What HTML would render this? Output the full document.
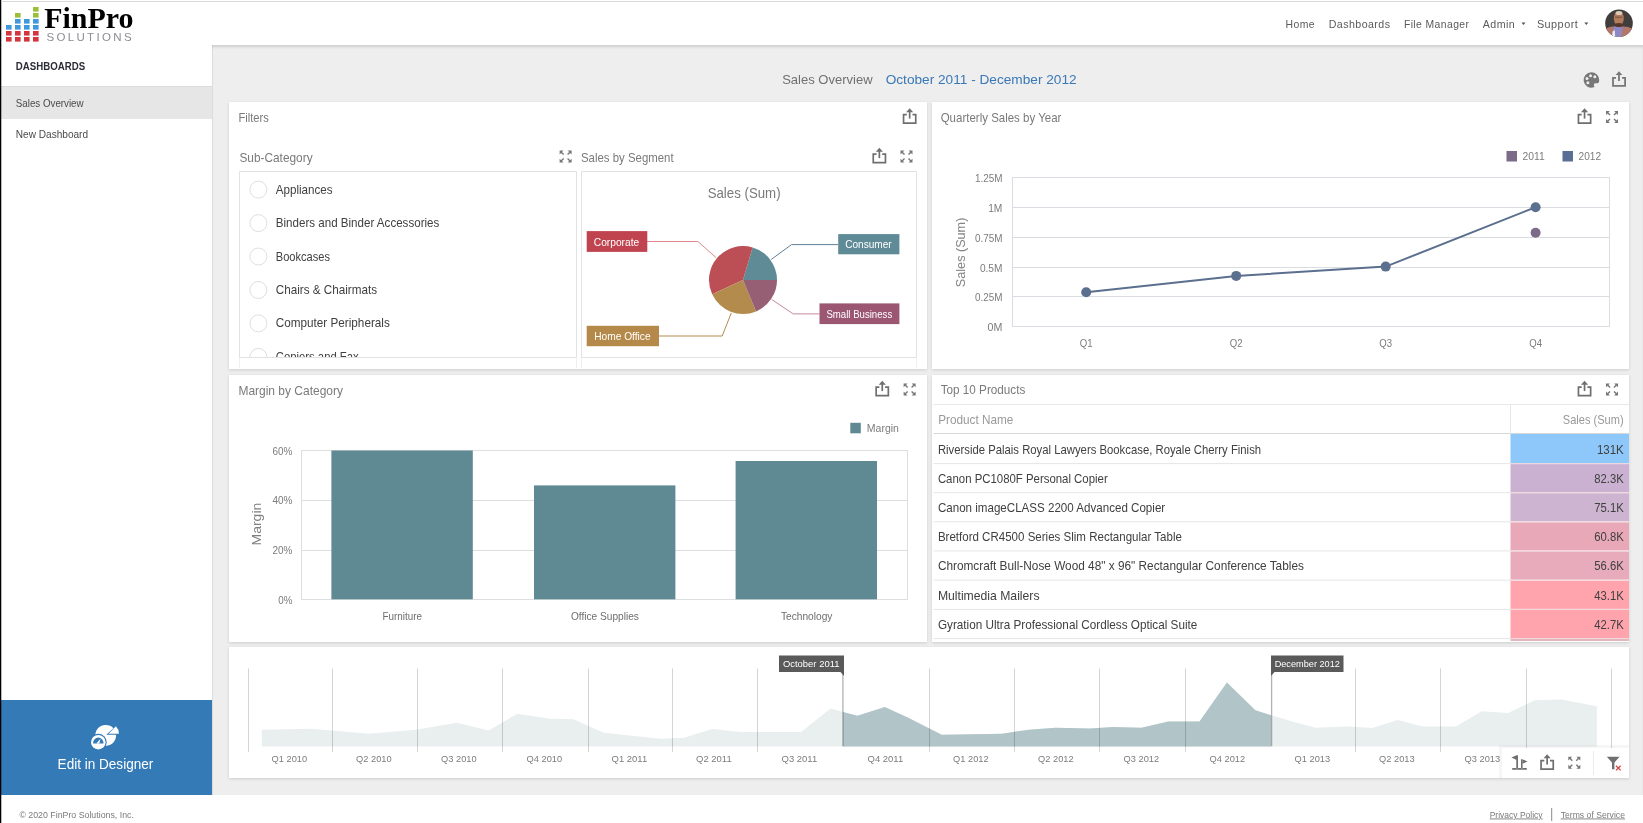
<!DOCTYPE html>
<html lang="en">
<head>
<meta charset="utf-8">
<title>FinPro Solutions - Sales Overview</title>
<style>
*{box-sizing:border-box;margin:0;padding:0}
html,body{width:1643px;height:823px;overflow:hidden;background:#fff}
body{font-family:"Liberation Sans",sans-serif;color:#444;position:relative;font-size:12px}
.abs{position:absolute}
.t{position:absolute;white-space:nowrap;line-height:1}
#leftedge{left:0;top:0;width:2px;height:823px;background:linear-gradient(90deg,#000 0,#000 50%,rgba(0,0,0,.28) 50%);z-index:50}
#topline{left:1px;top:1px;width:1642px;height:1px;background:#dadadd;z-index:50}
#header{left:0;top:0;width:1643px;height:45px;background:#fff;z-index:5}
#main{left:212px;top:45px;width:1431px;height:750px;background:#eee;z-index:6;box-shadow:inset 0 3px 3px -1px rgba(0,0,0,.13), inset 1px 0 0 rgba(0,0,0,.05)}
#sidebar{left:0;top:45px;width:212px;height:750px;background:#fff}
#sel{left:1px;top:86px;width:211px;height:33px;background:#e6e6e6;border-top:1px solid #dcdcdc}
#editbtn{left:1px;top:700px;width:211px;height:95px;background:#337ab7;z-index:7}
#footer{left:0;top:795px;width:1643px;height:28px;background:#fff}
.card{position:absolute;background:#fff;box-shadow:0 1px 3px rgba(0,0,0,.14);z-index:8}
svg{position:absolute;left:0;top:0;overflow:visible}
svg text{font-family:"Liberation Sans",sans-serif}
svg .ttl{fill:#7a7a7a;font-size:11.9px}
svg .li{fill:#404040;font-size:11.9px}
svg .pl{fill:#fff;font-size:10.6px}
svg .ax{fill:#7c7c7c;font-size:10.6px}
svg .nav{fill:#5a5a5a;font-size:11px;letter-spacing:.45px}
</style>
</head>
<body>
<div id="header" class="abs"></div>
<div id="sidebar" class="abs"></div>
<div id="sel" class="abs"></div>
<div id="main" class="abs"></div>
<div id="footer" class="abs"></div>
<div id="editbtn" class="abs"></div>
<div id="leftedge" class="abs"></div>
<div id="topline" class="abs"></div>
<div class="card" id="c1" style="left:229px;top:102px;width:698px;height:267px"></div>
<div class="card" id="c2" style="left:932px;top:102px;width:697px;height:267px"></div>
<div class="card" id="c3" style="left:229px;top:375px;width:698px;height:267px"></div>
<div class="card" id="c4" style="left:932px;top:375px;width:697px;height:267px"></div>
<div class="card" id="c5" style="left:229px;top:647px;width:1400px;height:131px"></div>
<svg id="ov" width="1643" height="823" viewBox="0 0 1643 823" style="z-index:20;will-change:transform">
<defs>
  <g id="ic-export" fill="none" stroke="#6f6f6f" stroke-width="1.7">
    <path d="M4.1 6.6H0.85V15.15H13.05V6.6H9.8"/>
    <path d="M6.95 10.6V3.5" />
    <path d="M3.4 4.3L6.95 0.2L10.5 4.3Z" fill="#6f6f6f" stroke="none"/>
  </g>
  <g id="ic-expand" fill="#777" stroke="none">
    <path d="M0 0H3.9L0 3.9Z"/><path d="M12 0H8.1L12 3.9Z"/><path d="M0 12H3.9L0 8.1Z"/><path d="M12 12H8.1L12 8.1Z"/>
    <path d="M1.4 1.4L4 4M10.6 1.4L8 4M1.4 10.6L4 8M10.6 10.6L8 8" stroke="#777" stroke-width="1.4" fill="none"/>
  </g>
</defs>
<g id="chrome">
<rect x="33" y="7" width="5.6" height="4.6" fill="#9bbf3b"/><rect x="15" y="13" width="5.6" height="4.6" fill="#9bbf3b"/><rect x="33" y="13" width="5.6" height="4.6" fill="#9bbf3b"/><rect x="15" y="19" width="5.6" height="4.6" fill="#3f97dc"/><rect x="24" y="19" width="5.6" height="4.6" fill="#3f97dc"/><rect x="33" y="19" width="5.6" height="4.6" fill="#3f97dc"/><rect x="6" y="25" width="5.6" height="4.6" fill="#3f97dc"/><rect x="15" y="25" width="5.6" height="4.6" fill="#3f97dc"/><rect x="24" y="25" width="5.6" height="4.6" fill="#3f97dc"/><rect x="33" y="25" width="5.6" height="4.6" fill="#3f97dc"/><rect x="6" y="31" width="5.6" height="4.6" fill="#d5353f"/><rect x="15" y="31" width="5.6" height="4.6" fill="#d5353f"/><rect x="24" y="31" width="5.6" height="4.6" fill="#d5353f"/><rect x="33" y="31" width="5.6" height="4.6" fill="#d5353f"/><rect x="6" y="37" width="5.6" height="4.6" fill="#d5353f"/><rect x="15" y="37" width="5.6" height="4.6" fill="#d5353f"/><rect x="24" y="37" width="5.6" height="4.6" fill="#d5353f"/><rect x="33" y="37" width="5.6" height="4.6" fill="#d5353f"/>
<text x="44.2" y="28.3" textLength="89.3" lengthAdjust="spacingAndGlyphs" font-size="29.4" font-weight="bold" fill="#000" style="font-family:'Liberation Serif',serif">FinPro</text>
<text x="46.4" y="40.8" textLength="85.2" lengthAdjust="spacing" font-size="11.5" fill="#8c8c94">SOLUTIONS</text>
<text x="1285.6" y="28.2" class="nav" textLength="29.5" lengthAdjust="spacingAndGlyphs">Home</text>
<text x="1328.7" y="28.2" class="nav" textLength="61.8" lengthAdjust="spacingAndGlyphs">Dashboards</text>
<text x="1403.9" y="28.2" class="nav" textLength="65.5" lengthAdjust="spacingAndGlyphs">File Manager</text>
<text x="1482.8" y="28.2" class="nav" textLength="32.4" lengthAdjust="spacingAndGlyphs">Admin</text>
<text x="1536.9" y="28.2" class="nav" textLength="41.3" lengthAdjust="spacingAndGlyphs">Support</text>
<path d="M1521.5 22.6h4l-2 2.4z M1584.3 22.6h4l-2 2.4z" fill="#555"/>
<clipPath id="avc"><circle cx="1619" cy="23.3" r="13.8"/></clipPath>
<g clip-path="url(#avc)">
<rect x="1604" y="8" width="30" height="31" fill="#403e3c"/>
<path d="M1604 29.5Q1610 26.2 1614 26.5H1623Q1628 26.2 1634 29.5V40H1604Z" fill="#b3766a"/>
<path d="M1614 26.5H1622.6L1621.2 38H1613Z" fill="#8c88c6"/>
<path d="M1612.6 31.5L1614.6 30L1615.4 38H1612Z" fill="#efeff4"/>
<ellipse cx="1618.8" cy="18.6" rx="5" ry="7.4" fill="#b27c5c"/>
<ellipse cx="1619" cy="13" rx="3.4" ry="2.1" fill="#dccab6"/>
<ellipse cx="1618.8" cy="25" rx="4.2" ry="2" fill="#54382a"/>
<path d="M1615 17.2H1622.6" stroke="#6a4a3a" stroke-width="0.9"/>
</g>
<text x="15.8" y="69.8" textLength="69.3" lengthAdjust="spacingAndGlyphs" font-size="10.3" font-weight="bold" fill="#2b2b36">DASHBOARDS</text>
<text x="15.8" y="106.5" textLength="67.8" lengthAdjust="spacingAndGlyphs" font-size="10.3" fill="#4a4a4a">Sales Overview</text>
<text x="15.8" y="138.1" textLength="72.3" lengthAdjust="spacingAndGlyphs" font-size="10.3" fill="#4a4a4a">New Dashboard</text>
<text x="57.6" y="768.9" textLength="95.7" lengthAdjust="spacingAndGlyphs" font-size="14" fill="#fff">Edit in Designer</text>
<text x="19.4" y="817.5" textLength="114.5" lengthAdjust="spacingAndGlyphs" font-size="8.8" fill="#7a7a7a">© 2020 FinPro Solutions, Inc.</text>
<text x="1489.7" y="817.5" textLength="52.9" lengthAdjust="spacingAndGlyphs" font-size="8.8" fill="#7a7a7a" text-decoration="underline">Privacy Policy</text>
<text x="1560.7" y="817.5" textLength="64.3" lengthAdjust="spacingAndGlyphs" font-size="8.8" fill="#7a7a7a" text-decoration="underline">Terms of Service</text>
<path d="M1551.7 808V821" stroke="#8a8a8a"/>
<text x="782.2" y="84.2" textLength="90.4" lengthAdjust="spacingAndGlyphs" font-size="13" fill="#707070">Sales Overview</text>
<text x="885.7" y="84.2" textLength="190.9" lengthAdjust="spacingAndGlyphs" font-size="13" fill="#3a78b5">October 2011 - December 2012</text>
<g transform="translate(1591.4 80)">
<path d="M0 -7.8A7.8 7.8 0 1 0 2.6 7.35C3.6 6.9 2.3 5.6 2.5 4.4C2.8 2.8 5 3.4 6.4 3.2C7.6 3 7.8 1.4 7.8 0A7.8 7.8 0 0 0 0 -7.8Z" fill="#777"/>
<circle cx="-0.9" cy="-4.2" r="1.5" fill="#eee"/><circle cx="3.4" cy="-3.3" r="1.5" fill="#eee"/><circle cx="-4.4" cy="-1.5" r="1.5" fill="#eee"/><circle cx="-3.5" cy="2.8" r="1.5" fill="#eee"/>
</g>
<g fill="none" stroke="#777" stroke-width="1.8">
<path d="M1616 77.9H1613V85.9H1625.1V77.9H1622.1"/><path d="M1619 81V74.5"/><path d="M1615.6 75L1619 71.2L1622.4 75Z" fill="#777" stroke="none"/>
</g>
<g transform="translate(105.7 735.4)">
<path d="M0.6 -0.6L7.7 -7.1A10.45 10.45 0 1 0 10.43 -0.6Z" fill="#fff"/>
<path d="M2.8 -1.7L10.2 -9.1A10.45 10.45 0 0 1 13.25 -1.7Z" fill="#fff"/>
<circle cx="-7.4" cy="6.8" r="8.4" fill="#337ab7"/>
<circle cx="-7.4" cy="6.8" r="7.3" fill="#fff"/>
<path d="M-12.7 8A5.3 6 0 0 1 -2.1 8Z" fill="#337ab7"/>
<path d="M-9.4 8.2L-5.2 3.4L-6.4 8.2Z" fill="#fff"/>
</g>
</g>
<g id="c1g">
<text x="238.4" y="122" class="ttl" textLength="30.4" lengthAdjust="spacingAndGlyphs">Filters</text>
<use href="#ic-export" x="902.7" y="108"/>
<text x="239.4" y="161.5" class="ttl" textLength="73.2" lengthAdjust="spacingAndGlyphs">Sub-Category</text>
<use href="#ic-expand" x="559.6" y="150.6"/>
<path d="M239.5 357.5V171.5H576.5V357.5M239.5 357.5H576.5" fill="none" stroke="#e2e2e2"/><path d="M239.5 358V368M576.5 358V368" stroke="#efefef"/>
<clipPath id="lbclip"><rect x="240" y="172" width="336" height="185"/></clipPath>
<g clip-path="url(#lbclip)">
<circle cx="258.4" cy="189.6" r="8.5" fill="#fff" stroke="#dedede"/><text x="275.8" y="193.6" class="li" textLength="56.8" lengthAdjust="spacingAndGlyphs">Appliances</text>
<circle cx="258.4" cy="223.1" r="8.5" fill="#fff" stroke="#dedede"/><text x="275.8" y="227.1" class="li" textLength="163.5" lengthAdjust="spacingAndGlyphs">Binders and Binder Accessories</text>
<circle cx="258.4" cy="256.5" r="8.5" fill="#fff" stroke="#dedede"/><text x="275.8" y="260.5" class="li" textLength="54.2" lengthAdjust="spacingAndGlyphs">Bookcases</text>
<circle cx="258.4" cy="290" r="8.5" fill="#fff" stroke="#dedede"/><text x="275.8" y="294.0" class="li" textLength="101.3" lengthAdjust="spacingAndGlyphs">Chairs &amp; Chairmats</text>
<circle cx="258.4" cy="323.4" r="8.5" fill="#fff" stroke="#dedede"/><text x="275.8" y="327.4" class="li" textLength="114" lengthAdjust="spacingAndGlyphs">Computer Peripherals</text>
<circle cx="258.4" cy="356.9" r="8.5" fill="#fff" stroke="#dedede"/><text x="275.8" y="360.9" class="li" textLength="82.9" lengthAdjust="spacingAndGlyphs">Copiers and Fax</text>
</g>
<text x="581" y="161.5" class="ttl" textLength="92.6" lengthAdjust="spacingAndGlyphs">Sales by Segment</text>
<use href="#ic-export" x="872.4" y="147.5"/>
<use href="#ic-expand" x="900.5" y="150.6"/>
<path d="M581.5 357.5V171.5H916.5V357.5M581.5 357.5H916.5" fill="none" stroke="#e2e2e2"/><path d="M581.5 358V368M916.5 358V368" stroke="#efefef"/>
<text x="744.1" y="198" text-anchor="middle" textLength="72.9" lengthAdjust="spacingAndGlyphs" font-size="14.4" fill="#7a7a7a">Sales (Sum)</text>
<g fill="none" stroke-width="1">
<path d="M647 241.5H697.9L716.1 257.7" stroke="#e08a8e"/>
<path d="M838 244.6H791.5L771.2 259.5" stroke="#5f7f95"/>
<path d="M819.5 313.9H793.3L771.7 299.5" stroke="#c48a9a"/>
<path d="M659 336H722.2L731.3 312.9" stroke="#b28b4d"/>
</g>
<path d="M743 280L777.00 280.00A34 34 0 0 0 752.60 247.38Z" fill="#5f8b96"/>
<path d="M743 280L752.60 247.38A34 34 0 0 0 712.19 294.37Z" fill="#bc4f55"/>
<path d="M743 280L712.19 294.37A34 34 0 0 0 756.07 311.39Z" fill="#b28b4d"/>
<path d="M743 280L756.07 311.39A34 34 0 0 0 777.00 280.00Z" fill="#965f73"/>
<rect x="586.7" y="231.1" width="60.6" height="20.8" fill="#c0444f"/>
<text x="616.5" y="246.2" class="pl" text-anchor="middle" textLength="45.5" lengthAdjust="spacingAndGlyphs">Corporate</text>
<rect x="838.2" y="234.1" width="61.2" height="20.2" fill="#5f8b96"/>
<text x="868.4" y="248.2" class="pl" text-anchor="middle" textLength="46.5" lengthAdjust="spacingAndGlyphs">Consumer</text>
<rect x="819.5" y="303.4" width="79.9" height="20.7" fill="#9b5672"/>
<text x="859.3" y="317.7" class="pl" text-anchor="middle" textLength="65.8" lengthAdjust="spacingAndGlyphs">Small Business</text>
<rect x="586.7" y="325.8" width="72.3" height="20.4" fill="#b5894a"/>
<text x="622.4" y="340.1" class="pl" text-anchor="middle" textLength="56.5" lengthAdjust="spacingAndGlyphs">Home Office</text>
</g>
<g id="c2g">
<text x="940.7" y="122" class="ttl" textLength="120.7" lengthAdjust="spacingAndGlyphs">Quarterly Sales by Year</text>
<use href="#ic-export" x="1577.6" y="108"/>
<use href="#ic-expand" x="1606" y="111"/>
<rect x="1506.5" y="151" width="10.5" height="10.5" fill="#7b6a88"/>
<text x="1522.6" y="159.8" class="ax" textLength="22.2" lengthAdjust="spacingAndGlyphs">2011</text>
<rect x="1562.5" y="151" width="10.5" height="10.5" fill="#5a6f94"/>
<text x="1578.6" y="159.8" class="ax" textLength="22.5" lengthAdjust="spacingAndGlyphs">2012</text>
<path d="M1012 177.5H1610" stroke="#d9dce0"/><path d="M1012 207.5H1610" stroke="#d9dce0"/><path d="M1012 237.5H1610" stroke="#d9dce0"/><path d="M1012 267.5H1610" stroke="#d9dce0"/><path d="M1012 296.5H1610" stroke="#d9dce0"/><path d="M1012 326.5H1610" stroke="#d9dce0"/>
<path d="M1012.5 177V327M1609.5 177V327" stroke="#d9dce0" fill="none"/>
<text x="1002.4" y="181.9" class="ax" text-anchor="end" textLength="27.5" lengthAdjust="spacingAndGlyphs">1.25M</text>
<text x="1002.4" y="211.9" class="ax" text-anchor="end" textLength="14.2" lengthAdjust="spacingAndGlyphs">1M</text>
<text x="1002.4" y="241.9" class="ax" text-anchor="end" textLength="27.5" lengthAdjust="spacingAndGlyphs">0.75M</text>
<text x="1002.4" y="271.9" class="ax" text-anchor="end" textLength="22.5" lengthAdjust="spacingAndGlyphs">0.5M</text>
<text x="1002.4" y="300.9" class="ax" text-anchor="end" textLength="27.5" lengthAdjust="spacingAndGlyphs">0.25M</text>
<text x="1002.4" y="330.9" class="ax" text-anchor="end" textLength="14.8" lengthAdjust="spacingAndGlyphs">0M</text>
<text x="1086.2" y="347.2" class="ax" text-anchor="middle" textLength="12.8" lengthAdjust="spacingAndGlyphs">Q1</text>
<text x="1236.2" y="347.2" class="ax" text-anchor="middle" textLength="12.8" lengthAdjust="spacingAndGlyphs">Q2</text>
<text x="1385.7" y="347.2" class="ax" text-anchor="middle" textLength="12.8" lengthAdjust="spacingAndGlyphs">Q3</text>
<text x="1535.6" y="347.2" class="ax" text-anchor="middle" textLength="12.8" lengthAdjust="spacingAndGlyphs">Q4</text>
<text transform="translate(964.6 252.4) rotate(-90)" text-anchor="middle" font-size="12.2" fill="#858585" textLength="69.5" lengthAdjust="spacingAndGlyphs">Sales (Sum)</text>
<path d="M1086.2 292.3L1236.2 275.9L1385.7 266.6L1535.6 207.2" fill="none" stroke="#5b6f8e" stroke-width="2"/>
<circle cx="1086.2" cy="292.3" r="5" fill="#5b6f8e"/><circle cx="1236.2" cy="275.9" r="5" fill="#5b6f8e"/><circle cx="1385.7" cy="266.6" r="5" fill="#5b6f8e"/><circle cx="1535.6" cy="207.2" r="5" fill="#5b6f8e"/>
<circle cx="1535.6" cy="232.8" r="5" fill="#7b6a88"/>
</g>
<g id="c3g">
<text x="238.4" y="394.6" class="ttl" textLength="104.6" lengthAdjust="spacingAndGlyphs">Margin by Category</text>
<use href="#ic-export" x="875.3" y="380.5"/>
<use href="#ic-expand" x="903.6" y="383.4"/>
<rect x="850.3" y="422.8" width="10.5" height="10.5" fill="#5f8993"/>
<text x="866.8" y="431.8" class="ax" textLength="32.1" lengthAdjust="spacingAndGlyphs">Margin</text>
<path d="M301 450.5H908" stroke="#dcdfdf"/><path d="M301 500.5H908" stroke="#dcdfdf"/><path d="M301 550.5H908" stroke="#dcdfdf"/><path d="M301 599.5H908" stroke="#dcdfdf"/>
<path d="M301.5 450.5V599.5M907.5 450.5V599.5" stroke="#dcdfdf" fill="none"/>
<rect x="331.4" y="450.5" width="141.4" height="148.8" fill="#5f8993"/><rect x="534" y="485.4" width="141.4" height="113.9" fill="#5f8993"/><rect x="735.6" y="461" width="141.4" height="138.3" fill="#5f8993"/>
<text x="292.4" y="454.5" class="ax" text-anchor="end" textLength="19.9" lengthAdjust="spacingAndGlyphs">60%</text>
<text x="292.4" y="504.4" class="ax" text-anchor="end" textLength="19.9" lengthAdjust="spacingAndGlyphs">40%</text>
<text x="292.4" y="554.2" class="ax" text-anchor="end" textLength="19.9" lengthAdjust="spacingAndGlyphs">20%</text>
<text x="292.4" y="604.0" class="ax" text-anchor="end" textLength="14.2" lengthAdjust="spacingAndGlyphs">0%</text>
<text x="402.2" y="619.6" class="ax" text-anchor="middle" textLength="39.4" lengthAdjust="spacingAndGlyphs" style="fill:#6e6e6e">Furniture</text>
<text x="604.9" y="619.6" class="ax" text-anchor="middle" textLength="67.9" lengthAdjust="spacingAndGlyphs" style="fill:#6e6e6e">Office Supplies</text>
<text x="806.7" y="619.6" class="ax" text-anchor="middle" textLength="51.5" lengthAdjust="spacingAndGlyphs" style="fill:#6e6e6e">Technology</text>
<text transform="translate(261.4 524.1) rotate(-90)" text-anchor="middle" font-size="13.6" fill="#808080" textLength="42.8" lengthAdjust="spacingAndGlyphs">Margin</text>
</g>
<g id="c4g">
<text x="940.7" y="394.3" class="ttl" textLength="84.6" lengthAdjust="spacingAndGlyphs">Top 10 Products</text>
<use href="#ic-export" x="1577.6" y="380.5"/>
<use href="#ic-expand" x="1606" y="383.4"/>
<path d="M933.5 404.5H1629" stroke="#e8e8e8"/><path d="M933.5 433.5H1629" stroke="#d8d8d8"/><path d="M1510.5 404.5V433.5" stroke="#e6e6e6"/>
<text x="938.2" y="424.1" textLength="75.2" lengthAdjust="spacingAndGlyphs" font-size="11.9" fill="#999">Product Name</text>
<text x="1623.6" y="424.1" text-anchor="end" textLength="60.8" lengthAdjust="spacingAndGlyphs" font-size="11.9" fill="#999">Sales (Sum)</text>
<rect x="1510.5" y="434.0" width="118.5" height="29.1" fill="#8ec8fb"/>
<text x="937.9" y="453.7" class="li" textLength="323.2" lengthAdjust="spacingAndGlyphs">Riverside Palais Royal Lawyers Bookcase, Royale Cherry Finish</text>
<text x="1623.8" y="453.7" class="li" text-anchor="end" textLength="26.9" lengthAdjust="spacingAndGlyphs">131K</text>
<rect x="1510.5" y="464.1" width="118.5" height="28.1" fill="#cab1d1"/>
<text x="937.9" y="483.1" class="li" textLength="169.8" lengthAdjust="spacingAndGlyphs">Canon PC1080F Personal Copier</text>
<text x="1623.8" y="483.1" class="li" text-anchor="end" textLength="29.5" lengthAdjust="spacingAndGlyphs">82.3K</text>
<rect x="1510.5" y="493.2" width="118.5" height="28.1" fill="#cdb4d0"/>
<text x="937.9" y="512.2" class="li" textLength="227.3" lengthAdjust="spacingAndGlyphs">Canon imageCLASS 2200 Advanced Copier</text>
<text x="1623.8" y="512.2" class="li" text-anchor="end" textLength="29.5" lengthAdjust="spacingAndGlyphs">75.1K</text>
<rect x="1510.5" y="522.3" width="118.5" height="28.1" fill="#e8a8b8"/>
<text x="937.9" y="541.3" class="li" textLength="244" lengthAdjust="spacingAndGlyphs">Bretford CR4500 Series Slim Rectangular Table</text>
<text x="1623.8" y="541.3" class="li" text-anchor="end" textLength="29.5" lengthAdjust="spacingAndGlyphs">60.8K</text>
<rect x="1510.5" y="551.4" width="118.5" height="28.3" fill="#e7abbc"/>
<text x="937.9" y="570.4" class="li" textLength="366" lengthAdjust="spacingAndGlyphs">Chromcraft Bull-Nose Wood 48&quot; x 96&quot; Rectangular Conference Tables</text>
<text x="1623.8" y="570.4" class="li" text-anchor="end" textLength="29.5" lengthAdjust="spacingAndGlyphs">56.6K</text>
<rect x="1510.5" y="580.7" width="118.5" height="28.2" fill="#ffa4ad"/>
<text x="937.9" y="599.8" class="li" textLength="101.6" lengthAdjust="spacingAndGlyphs">Multimedia Mailers</text>
<text x="1623.8" y="599.8" class="li" text-anchor="end" textLength="29.5" lengthAdjust="spacingAndGlyphs">43.1K</text>
<rect x="1510.5" y="609.9" width="118.5" height="28.2" fill="#ffa4ad"/>
<text x="937.9" y="628.9" class="li" textLength="259.4" lengthAdjust="spacingAndGlyphs">Gyration Ultra Professional Cordless Optical Suite</text>
<text x="1623.8" y="628.9" class="li" text-anchor="end" textLength="29.5" lengthAdjust="spacingAndGlyphs">42.7K</text>
<path d="M933.5 463.6H1510" stroke="#e6e6e6"/><path d="M1510 463.6H1629" stroke="#efd6db"/><path d="M933.5 492.7H1510" stroke="#e6e6e6"/><path d="M1510 492.7H1629" stroke="#efd6db"/><path d="M933.5 521.8H1510" stroke="#e6e6e6"/><path d="M1510 521.8H1629" stroke="#efd6db"/><path d="M933.5 550.9H1510" stroke="#e6e6e6"/><path d="M1510 550.9H1629" stroke="#efd6db"/><path d="M933.5 580.2H1510" stroke="#e6e6e6"/><path d="M1510 580.2H1629" stroke="#efd6db"/><path d="M933.5 609.4H1510" stroke="#e6e6e6"/><path d="M1510 609.4H1629" stroke="#efd6db"/><path d="M933.5 638.6H1510" stroke="#e6e6e6"/><path d="M1510 638.6H1629" stroke="#efd6db"/>
<rect x="1510.5" y="639.1" width="118.5" height="1.8" fill="#e0b0b5"/>
</g>
<g id="c5g">
<clipPath id="selclip"><rect x="843.0" y="660" width="428.0" height="90"/></clipPath>
<path d="M261.8 746.5L261.8 729.7L311.4 728.7L331.4 730.4L368.3 733.7L416.1 729.7L457 722.7L488.8 730.4L517.2 713.7L550 718.7L573.5 719.3L603.6 732.7L660.5 738.8L684 737.8L712.4 729L740.9 732L801.1 732L830.6 708.6L843 712L857.4 715.7L884.8 707L908.3 717.7L941.7 734.7L1002 733.7L1028.8 729.7L1055.6 727.7L1090 728.4L1113 727L1141.5 727.7L1168.3 721.4L1199.5 721.4L1226.9 682.5L1255.4 710.3L1271.4 715.3L1293.9 722L1315.6 727.7L1347.4 726.4L1372.5 728L1397.6 720L1422.8 726.4L1456.2 726.4L1481.4 711.3L1508.1 713L1534.9 700.3L1561.7 699.6L1596.8 706.3L1596.8 746.5Z" fill="#e9eeef"/>
<path d="M261.8 746.5L261.8 729.7L311.4 728.7L331.4 730.4L368.3 733.7L416.1 729.7L457 722.7L488.8 730.4L517.2 713.7L550 718.7L573.5 719.3L603.6 732.7L660.5 738.8L684 737.8L712.4 729L740.9 732L801.1 732L830.6 708.6L843 712L857.4 715.7L884.8 707L908.3 717.7L941.7 734.7L1002 733.7L1028.8 729.7L1055.6 727.7L1090 728.4L1113 727L1141.5 727.7L1168.3 721.4L1199.5 721.4L1226.9 682.5L1255.4 710.3L1271.4 715.3L1293.9 722L1315.6 727.7L1347.4 726.4L1372.5 728L1397.6 720L1422.8 726.4L1456.2 726.4L1481.4 711.3L1508.1 713L1534.9 700.3L1561.7 699.6L1596.8 706.3L1596.8 746.5Z" fill="#b1c4c7" clip-path="url(#selclip)"/>
<path d="M248.5 668.5V752" stroke="rgba(0,0,0,.17)"/><path d="M332.5 668.5V752" stroke="rgba(0,0,0,.17)"/><path d="M417.5 668.5V752" stroke="rgba(0,0,0,.17)"/><path d="M502.5 668.5V752" stroke="rgba(0,0,0,.17)"/><path d="M588.5 668.5V752" stroke="rgba(0,0,0,.17)"/><path d="M672.5 668.5V752" stroke="rgba(0,0,0,.17)"/><path d="M757.5 668.5V752" stroke="rgba(0,0,0,.17)"/><path d="M929.5 668.5V752" stroke="rgba(0,0,0,.17)"/><path d="M1014.5 668.5V752" stroke="rgba(0,0,0,.17)"/><path d="M1099.5 668.5V752" stroke="rgba(0,0,0,.17)"/><path d="M1185.5 668.5V752" stroke="rgba(0,0,0,.17)"/><path d="M1355.5 668.5V752" stroke="rgba(0,0,0,.17)"/><path d="M1440.5 668.5V752" stroke="rgba(0,0,0,.17)"/><path d="M1526.5 668.5V752" stroke="rgba(0,0,0,.17)"/><path d="M1611.5 668.5V752" stroke="rgba(0,0,0,.17)"/>
<text x="289.4" y="761.6" class="ax" text-anchor="middle" textLength="35.6" lengthAdjust="spacingAndGlyphs" style="font-size:9.9px">Q1 2010</text>
<text x="373.9" y="761.6" class="ax" text-anchor="middle" textLength="35.6" lengthAdjust="spacingAndGlyphs" style="font-size:9.9px">Q2 2010</text>
<text x="458.9" y="761.6" class="ax" text-anchor="middle" textLength="35.6" lengthAdjust="spacingAndGlyphs" style="font-size:9.9px">Q3 2010</text>
<text x="544.4" y="761.6" class="ax" text-anchor="middle" textLength="35.6" lengthAdjust="spacingAndGlyphs" style="font-size:9.9px">Q4 2010</text>
<text x="629.4" y="761.6" class="ax" text-anchor="middle" textLength="35.6" lengthAdjust="spacingAndGlyphs" style="font-size:9.9px">Q1 2011</text>
<text x="713.9" y="761.6" class="ax" text-anchor="middle" textLength="35.6" lengthAdjust="spacingAndGlyphs" style="font-size:9.9px">Q2 2011</text>
<text x="799.4" y="761.6" class="ax" text-anchor="middle" textLength="35.6" lengthAdjust="spacingAndGlyphs" style="font-size:9.9px">Q3 2011</text>
<text x="885.4" y="761.6" class="ax" text-anchor="middle" textLength="35.6" lengthAdjust="spacingAndGlyphs" style="font-size:9.9px">Q4 2011</text>
<text x="970.9" y="761.6" class="ax" text-anchor="middle" textLength="35.6" lengthAdjust="spacingAndGlyphs" style="font-size:9.9px">Q1 2012</text>
<text x="1055.9" y="761.6" class="ax" text-anchor="middle" textLength="35.6" lengthAdjust="spacingAndGlyphs" style="font-size:9.9px">Q2 2012</text>
<text x="1141.4" y="761.6" class="ax" text-anchor="middle" textLength="35.6" lengthAdjust="spacingAndGlyphs" style="font-size:9.9px">Q3 2012</text>
<text x="1227.4" y="761.6" class="ax" text-anchor="middle" textLength="35.6" lengthAdjust="spacingAndGlyphs" style="font-size:9.9px">Q4 2012</text>
<text x="1312.4" y="761.6" class="ax" text-anchor="middle" textLength="35.6" lengthAdjust="spacingAndGlyphs" style="font-size:9.9px">Q1 2013</text>
<text x="1396.9" y="761.6" class="ax" text-anchor="middle" textLength="35.6" lengthAdjust="spacingAndGlyphs" style="font-size:9.9px">Q2 2013</text>
<text x="1482.4" y="761.6" class="ax" text-anchor="middle" textLength="35.6" lengthAdjust="spacingAndGlyphs" style="font-size:9.9px">Q3 2013</text>
<path d="M842.9 672V746.2M1271.6 672V746.2" stroke="rgba(0,0,0,.3)" stroke-width="1.3"/>
<path d="M779 655.5H844.0V676L840.5 672H779Z" fill="#5a5a5a"/>
<text x="811.2" y="667.2" text-anchor="middle" textLength="56.5" lengthAdjust="spacingAndGlyphs" font-size="9.4" fill="#fff">October 2011</text>
<path d="M1271.0 655.5H1343.5V672H1274.5L1271.0 676Z" fill="#5a5a5a"/>
<text x="1307.3" y="667.2" text-anchor="middle" textLength="65.3" lengthAdjust="spacingAndGlyphs" font-size="9.4" fill="#fff">December 2012</text>
<path d="M1500.5 778V746.5H1629" fill="none" stroke="rgba(0,0,0,.035)" stroke-width="3"/><rect x="1502" y="748" width="127" height="30" fill="#fff"/>
<g fill="#6f6f6f" stroke="none">
<path d="M1516.3 755.2V768.3H1518V755.2Z M1516.6 755.2L1511.4 757.6L1516.6 760Z M1521 759.3V768.3H1522.6V759.3Z M1522.4 759.2L1527.6 761.5L1522.4 763.8Z M1512.2 768H1526.8V769.7H1512.2Z"/>
</g>
<use href="#ic-export" x="1540.2" y="754"/>
<use href="#ic-expand" x="1568.3" y="756.7"/>
<path d="M1593.5 751V775" stroke="#ececec"/>
<path d="M1606.8 756.8H1619.6L1614.4 762.5V769.3H1612V762.5Z" fill="#6f6f6f"/>
<path d="M1616 765.7L1620.6 770.4M1620.6 765.7L1616 770.4" stroke="#d9453f" stroke-width="1.3"/>
</g>
</svg>
</body>
</html>
